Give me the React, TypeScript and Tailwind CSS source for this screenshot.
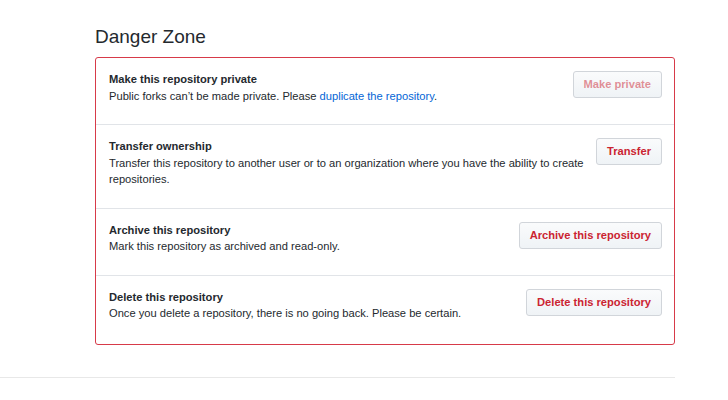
const rows = [
  {
    title: 'Make this repository private',
    body: (
      <>
        Public forks can’t be made private. Please{' '}
        <a href="#" className="text-[#0366d6]">
          duplicate the repository
        </a>
        .
      </>
    ),
    action: 'Make private',
    disabled: true,
  },
  {
    title: 'Transfer ownership',
    body: 'Transfer this repository to another user or to an organization where you have the ability to create repositories.',
    action: 'Transfer',
  },
  {
    title: 'Archive this repository',
    body: 'Mark this repository as archived and read-only.',
    action: 'Archive this repository',
  },
  {
    title: 'Delete this repository',
    body: 'Once you delete a repository, there is no going back. Please be certain.',
    action: 'Delete this repository',
  },
];

export default function App() {
  return (
    <div className="min-h-[400px] bg-white text-[#24292e] font-['Liberation_Sans',Arial,sans-serif]">
      <div className="w-[675px] pt-[25px] pl-[95px]">
        <h2 className="text-[19px] leading-[24px] font-normal mb-[8px]">Danger Zone</h2>
        <div className="border border-[#d73a49] rounded-[3px]">
          {rows.map((r, i) => (
            <div
              key={r.title}
              className={`flex items-start gap-[10px] pl-[13px] pr-[12px] pt-[13px] ${
                i > 0 ? 'border-t border-[#e1e4e8]' : ''
              } ${i === rows.length - 1 ? 'pb-[15px]' : 'pb-[13px]'}`}
            >
              <div className="flex-1 text-[11.15px] leading-[16.5px]">
                <div className="font-bold">{r.title}</div>
                <p className="mb-[7px]">{r.body}</p>
              </div>
              <button
                className={`h-[27px] px-[10px] text-[11.15px] font-bold border border-[#d1d5da] rounded-[3px] bg-gradient-to-b from-[#fafbfc] to-[#eff3f6] whitespace-nowrap ${
                  r.disabled ? 'text-[#cb2431]/50 from-[#f3f4f6] to-[#eff1f3]' : 'text-[#cb2431]'
                }`}
              >
                {r.action}
              </button>
            </div>
          ))}
        </div>
      </div>
      <div className="w-[675px] mt-[32px] border-t border-[#e8e8e8]" />
    </div>
  );
}
